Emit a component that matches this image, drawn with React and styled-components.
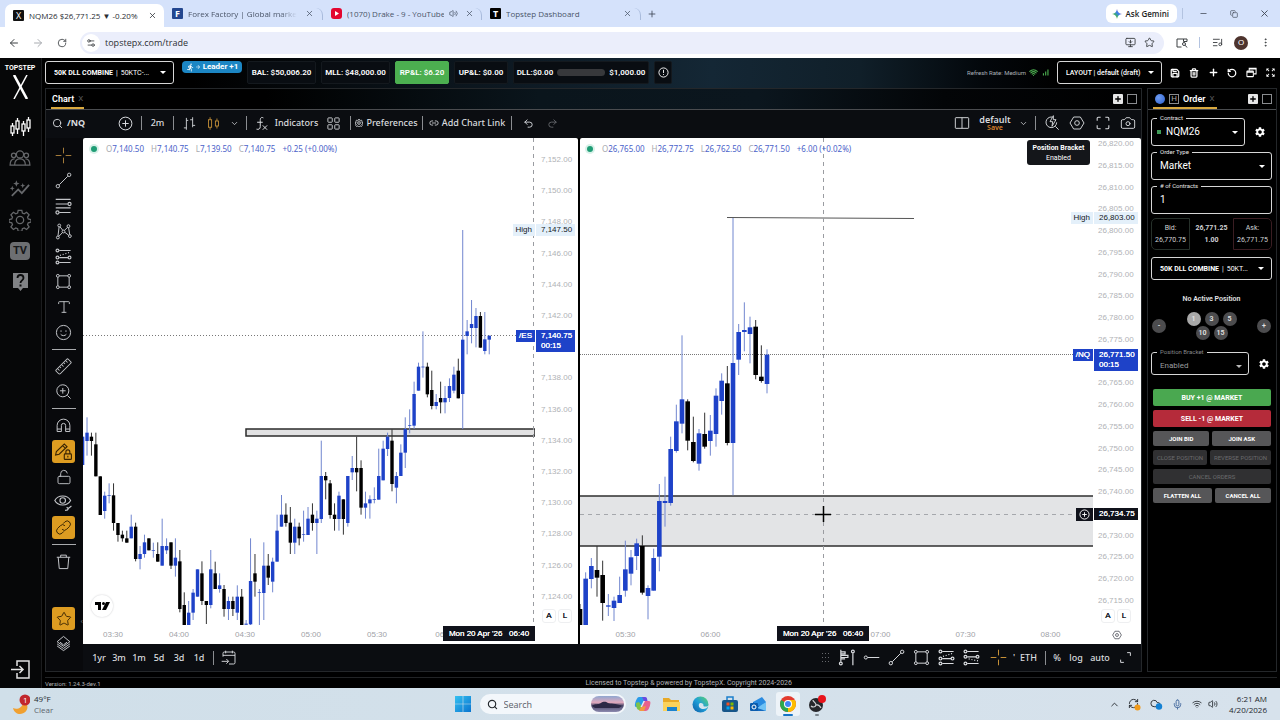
import styled, { createGlobalStyle, css } from 'styled-components'
import {
  ArrowLeft, ArrowRight, RotateCw, RotateCcw, X, Plus, Minus, Star, Type, Trash2, Save, Undo2, Redo2,
  Search, Camera, Mic, Wifi, Volume2, ChevronUp, ChevronDown, Settings2, MoreVertical, ListMusic,
  MonitorDown, Link2, LockOpen, Copy, RefreshCw, Cloud,
} from 'lucide-react'
import { MdSettings, MdSignalCellularAlt, MdDirectionsRun, MdArrowForward, MdZoomOutMap } from 'react-icons/md'

const GlobalStyle = createGlobalStyle`
  * {
    box-sizing: border-box;
  }

  body {
    margin: 0;
    background: #000;
    font-family: Roboto, sans-serif;
    font-size: 8px;
    line-height: 12px;
    color: #fff;
  }

  button, select, input {
    font: inherit;
    color: inherit;
    margin: 0;
    padding: 0;
    border: 0;
    background: none;
  }

  svg {
    display: block;
    flex: none;
  }
`

const uiFont = "'Noto Sans', 'Open Sans', sans-serif"
const chartFont = "'Liberation Sans', Arial, sans-serif"
const blue = '#1e42c8'

const Page = styled.div`
  min-height: 100vh;
  display: flex;
  flex-direction: column;
`

const Spacer = styled.div`
  flex: 1;
`

/* browser */

const TabStrip = styled.div`
  height: 27px;
  display: flex;
  align-items: center;
  padding-left: 5px;
  background: #d5e2fb;
  color: #3f4754;
  font-family: 'Open Sans', sans-serif;
`

const BrowserTab = styled.div`
  flex: 0 1 159px;
  min-width: 0;
  height: ${p => (p.$active ? '23px' : '12px')};
  margin-top: ${p => (p.$active ? '4px' : '0')};
  padding: 0 6px 0 8px;
  display: flex;
  align-items: center;
  gap: 5px;
  border-radius: 7px 7px 0 0;
  background: ${p => (p.$active ? '#fff' : 'transparent')};
  border-right: 1px solid ${p => (p.$line ? '#a9bbdc' : 'transparent')};
  color: ${p => (p.$active ? '#2a2d33' : '#4a5568')};
`

const TabTitle = styled.span`
  flex: 1;
  min-width: 0;
  overflow: hidden;
  white-space: nowrap;
  ${p => p.$fade && css`
    mask-image: linear-gradient(90deg, #000 85%, transparent);
  `}
`

const Favicon = styled.span`
  width: 11px;
  height: 11px;
  flex: none;
  display: grid;
  place-items: center;
  background: ${p => p.$bg};
  border-radius: ${p => p.$round || '1px'};
  color: #fff;
  font-size: 9px;
  font-weight: ${p => p.$weight || 400};
  line-height: 11px;
`

const IconButton = styled.button`
  display: grid;
  place-items: center;
  flex: none;
  width: ${p => p.$w || 16}px;
  height: ${p => p.$h || 16}px;
  color: ${p => p.$color || 'inherit'};
  cursor: pointer;
`

const GeminiButton = styled.button`
  height: 19px;
  padding: 0 8px 0 6px;
  display: flex;
  align-items: center;
  gap: 4px;
  border-radius: 6px;
  background: #fff;
  color: #1f1f1f;
  font-weight: 600;
`

const ThinLine = styled.i`
  width: 1px;
  height: 11px;
  margin: 0 5px;
  background: ${p => p.$color || '#b3c3e0'};
`

const AddressBar = styled.div`
  height: 31px;
  display: flex;
  align-items: center;
  padding: 0 3px 0 2px;
  background: #fff;
  color: #3c4043;
`

const Omnibox = styled.label`
  flex: 1;
  height: 22px;
  margin: 0 6px;
  padding: 0 6px 0 2px;
  display: flex;
  align-items: center;
  gap: 4px;
  border-radius: 11px;
  background: #ebeefb;

  input {
    flex: 1;
    min-width: 0;
    margin-left: 1px;
    font-family: 'Open Sans', sans-serif;
    font-size: 9px;
    color: #2b2e33;
  }
`

const SiteInfo = styled.span`
  width: 18px;
  height: 18px;
  display: grid;
  place-items: center;
  border-radius: 50%;
  background: #fff;
`

const Avatar = styled.span`
  width: 14px;
  height: 14px;
  margin: 0 5px;
  border-radius: 50%;
  background: #4e342e;
  color: #fff;
  font-family: ${chartFont};
  line-height: 14px;
  text-align: center;
`

/* trading app */

const Shell = styled.div`
  flex: 1;
  display: flex;
  background: #000;
`

const SideNav = styled.nav`
  width: 42px;
  flex: none;
  display: flex;
  flex-direction: column;
  align-items: center;
  padding: 4px 1px 7px 0;
  border-right: 1px solid #1b1c1e;
  background: #060708;
  color: #66686b;
`

const Brand = styled.div`
  display: flex;
  flex-direction: column;
  align-items: center;
  gap: 1px;
  margin-bottom: 12px;
  color: #fff;
  font-size: 7px;
  font-weight: 700;
`

const NavButton = styled.button`
  width: 30px;
  height: 31px;
  display: grid;
  place-items: center;
  color: ${p => (p.$active ? '#fff' : 'inherit')};
`

const TvBadge = styled.span`
  width: 20px;
  height: 18px;
  border-radius: 4px;
  background: #6d6f72;
  color: #17181a;
  font-size: 11px;
  font-weight: 700;
  line-height: 18px;
`

const Workspace = styled.div`
  flex: 1;
  min-width: 0;
  display: flex;
  flex-direction: column;
  padding-left: 3px;
`

const TopBar = styled.header`
  height: 30px;
  display: flex;
  align-items: flex-start;
  gap: 5px;
  padding-top: 3px;
  padding-right: 2px;
  background: linear-gradient(90deg, #000 12%, #0a1219 30%, #142735 54%, #101f29 66%, #03070b 76%, #000 82%);
  white-space: nowrap;
`

const SelectBox = styled.label`
  height: 23px;
  width: ${p => p.$w || 'auto'};
  display: flex;
  align-items: center;
  gap: 3px;
  padding: 0 7px 0 8px;
  border: 1px solid #d6d6d6;
  border-radius: 3px;
  font-size: 7px;
  white-space: nowrap;

  select {
    flex: 1;
    min-width: 0;
    appearance: none;
    outline: none;
    font-weight: ${p => p.$weight || 400};
  }
`

const Caret = styled.i`
  flex: none;
  border: 3px solid transparent;
  border-top-color: ${p => p.$color || '#fff'};
  border-bottom: 0;
`

const LeaderBadge = styled.span`
  width: 60px;
  height: 12px;
  margin: 0 0 0 3px;
  display: flex;
  align-items: center;
  justify-content: center;
  border-radius: 4px;
  background: #1c86c4;
  font-weight: 700;

  span {
    margin-left: 2px;
  }
`

const Stat = styled.div`
  height: 23px;
  width: ${p => p.$w}px;
  flex: none;
  display: flex;
  align-items: center;
  justify-content: center;
  gap: 4px;
  border: 1px solid ${p => (p.$green ? '#4caf50' : '#14191e')};
  border-radius: 2px;
  background: ${p => (p.$green ? '#4caf50' : '#090d12')};
  font-weight: 600;
`

const Meter = styled.i`
  width: 48px;
  height: 7px;
  border-radius: 4px;
  background: #37383b;
`

const RefreshRate = styled.span`
  height: 23px;
  display: flex;
  align-items: center;
  gap: 3px;
  margin-right: 2px;
  color: #aab0b6;
  font-size: 6px;

  svg {
    color: #4caf50;
  }
`

const TopActions = styled.div`
  height: 23px;
  display: flex;
  align-items: center;
  gap: 3px;
`

const Panels = styled.main`
  flex: 1;
  display: flex;
  gap: 5px;
  padding-right: 3px;
`

const Panel = styled.section`
  min-width: 0;
  display: flex;
  flex-direction: column;
  flex: ${p => (p.$grow ? '1' : 'none')};
  width: ${p => (p.$grow ? 'auto' : '130px')};
  border: 1px solid #24272a;
  background: ${p => (p.$grow ? '#0b0d11' : '#000')};
`

const PanelTabs = styled.div`
  height: 21px;
  flex: none;
  display: flex;
  align-items: stretch;
  padding: 0 4px 0 5px;
  border-bottom: 1px solid #4a4c4f;
  background: ${p => (p.$glow ? 'linear-gradient(90deg, #000 20%, #0a151c 45%, #0b161e 65%, #030507 82%, #000)' : '#000')};
`

const PanelTab = styled.div`
  display: flex;
  align-items: center;
  gap: 4px;
  padding: 0 ${p => (p.$pad || 1)}px;
  border-top: 2px solid transparent;
  border-bottom: 2px solid #d9a93f;
  font-size: 9px;
  font-weight: 600;

  small {
    color: #5a5c5f;
    font-size: 8px;
    font-weight: 400;
  }
`

const TabTools = styled.div`
  margin-left: auto;
  display: flex;
  align-items: center;
  gap: 4px;
`

const AddBox = styled.button`
  width: 10px;
  height: 10px;
  display: grid;
  place-items: center;
  border-radius: 1px;
  background: #e6e6e6;
  color: #000;
`

const EmptyBox = styled.button`
  width: 10px;
  height: 10px;
  border: 1px solid #8a8c8f;
`

const Globe = styled.i`
  width: 10px;
  height: 10px;
  border-radius: 50%;
  background: radial-gradient(circle at 35% 35%, #6f9cf0, #2b5fd0);
`

const LetterBox = styled.span`
  width: 10px;
  height: 10px;
  border: 1px solid #8a8c8f;
  color: #aaa;
  font-size: 8px;
  font-weight: 400;
  line-height: 8px;
  text-align: center;
`

const Toolbar = styled.div`
  height: ${p => p.$h}px;
  flex: none;
  display: flex;
  align-items: center;
  padding: ${p => p.$pad || '0'};
  background: #0b0d11;
  color: #d9dbdf;
  font-family: ${uiFont};
  font-size: 9px;
  font-weight: 500;
`

const Tool = styled.button`
  width: ${p => p.$w}px;
  height: 22px;
  flex: none;
  display: flex;
  align-items: center;
  justify-content: ${p => (p.$start ? 'flex-start' : 'center')};
  gap: ${p => p.$gap || 4}px;
  padding-left: ${p => (p.$start ? '6px' : '0')};
  color: ${p => p.$color || 'inherit'};
  font-weight: ${p => (p.$bold ? 700 : 'inherit')};
  white-space: nowrap;
`

const Sep = styled.i`
  width: 1px;
  height: 14px;
  flex: none;
  margin: 0 4px;
  background: #8b8d91;
`

const LayoutName = styled.button`
  width: 42px;
  flex: none;
  line-height: 9px;
  padding-bottom: 1px;
  font-weight: 600;

  small {
    display: block;
    color: #d9822b;
    font-size: 7px;
    line-height: 7px;
  }
`

const ChartBody = styled.div`
  flex: 1;
  display: flex;
`

const DrawBar = styled.div`
  width: 37px;
  flex: none;
  display: flex;
  flex-direction: column;
  align-items: center;
  padding: 5px 2px 15px 0;
  color: #c3c5c9;
  background: #08090c;
  position: relative;
`

const DrawGroup = styled.div`
  height: ${p => p.$h}px;
  display: flex;
  flex-direction: column;
  justify-content: space-between;
`

const DrawTool = styled.button`
  width: 25px;
  height: 25px;
  display: grid;
  place-items: center;
  border: 1px solid transparent;
  border-radius: 4px;
  background: ${p => (p.$on ? '#dd9c21' : 'transparent')};
  background-clip: padding-box;
  color: ${p => (p.$on ? '#3a2503' : p.$color || 'inherit')};
`

const DrawSep = styled.i`
  width: 24px;
  height: 1px;
  margin: 4px 0;
  background: #a9abae;
`

const Collapse = styled.button`
  position: absolute;
  right: 0;
  bottom: 43px;
  color: #77797c;
`

const ChartMain = styled.div`
  flex: 1;
  min-width: 0;
  display: flex;
  flex-direction: column;
`

const Panes = styled.div`
  flex: 1;
  display: flex;
  background: #000;
  gap: 2px;
`

const Pane = styled.div`
  width: ${p => p.$w || 'auto'};
  flex: ${p => (p.$w ? 'none' : '1')};
  min-width: 0;
  display: grid;
  grid-template-columns: 1fr ${p => p.$axis}px;
  grid-template-rows: 1fr 19px;
  position: relative;
  background: #fff;
  color: #131722;
  font-family: ${chartFont};
  line-height: 10px;
  border-radius: 2px 2px 0 0;
  overflow: hidden;
`

const Plot = styled.svg`
  width: 100%;
  height: 100%;
`

const PriceAxis = styled.div`
  display: flex;
  flex-direction: column;
  justify-content: space-between;
  align-items: flex-start;
  padding: ${p => p.$pad};
  color: #b0b2b6;
`

const AxisLabel = styled.span`
  visibility: ${p => (p.$covered ? 'hidden' : 'visible')};
`

const TimeAxis = styled.div`
  display: flex;
  align-items: center;
  overflow: hidden;
  color: #a0a2a7;

  span {
    position: relative;
    left: ${p => p.$shift}px;
    flex: 0 0 ${p => p.$slot}px;
    text-align: center;
  }
`

const Legend = styled.div`
  position: absolute;
  left: ${p => p.$left}px;
  top: 6px;
  display: flex;
  align-items: center;
  gap: 7px;
  color: #4a62c9;
  font-family: ${uiFont};
  white-space: nowrap;

  em {
    color: #a7a9ae;
    font-style: normal;
  }

  i {
    width: 6px;
    height: 6px;
    margin-right: 2px;
    border-radius: 50%;
    background: #1f9d75;
    box-shadow: 0 0 0 2px #d9f1e9;
  }
`

const PriceTag = styled.div`
  position: absolute;
  right: 3px;
  top: ${p => p.$top}px;
  display: flex;
  align-items: flex-start;
  gap: 1px;

  span {
    padding: 1px 3px;
    min-height: 12px;
    background: ${p => p.$bg};
    color: ${p => p.$color || '#fff'};
    text-shadow: ${p => (p.$color ? 'none' : '0 0 0 currentColor')};
  }

  span:last-child {
    width: ${p => p.$w}px;
    padding: 1px 0 1px 5px;
  }
`

const TimeTag = styled.div`
  position: absolute;
  left: ${p => p.$left}px;
  bottom: 3px;
  width: 92px;
  padding: 3px 0 2px;
  background: #10121b;
  color: #fff;
  text-align: center;
  text-shadow: 0 0 0 #fff;
  white-space: pre;
`

const ScaleButtons = styled.div`
  position: absolute;
  right: ${p => p.$right}px;
  bottom: 21px;
  display: flex;
  gap: 2px;

  button {
    width: 14px;
    height: 14px;
    border: 1px solid #eeeff1;
    border-radius: 3px;
    background: #fff;
    text-shadow: 0 0 0 currentColor;
  }
`

const Toast = styled.div`
  position: absolute;
  right: 51px;
  top: 2px;
  width: 63px;
  padding: 3px 0 2px;
  border-radius: 3px;
  background: #14161a;
  color: #fff;
  font-family: Roboto, sans-serif;
  font-size: 7px;
  text-align: center;
`

const TvMark = styled.div`
  position: absolute;
  left: 8px;
  bottom: 27px;
  width: 22px;
  height: 22px;
  display: grid;
  place-items: center;
  border-radius: 50%;
  background: #fff;
  box-shadow: 0 0 2px #c8c9cc;
`

const AxisSettings = styled.button`
  justify-self: center;
  align-self: center;
`

/* order ticket */

const Ticket = styled.form`
  display: flex;
  flex-direction: column;
  padding: 2px 4px 8px 3px;

  > fieldset {
    flex: none;
  }
`

const FieldRow = styled.div`
  display: flex;
  align-items: center;
  gap: 9px;
  margin-top: ${p => p.$mt || 0}px;
  padding-right: ${p => p.$pr}px;

  > svg {
    margin-top: 6px;
  }
`

const Field = styled.fieldset`
  flex: 1;
  min-width: 0;
  height: ${p => p.$h || 34}px;
  margin: 0;
  padding: 0 6px 0 8px;
  border: 1px solid #d6d6d6;
  border-radius: 3px;
  color: ${p => (p.$dim ? '#9a9c9f' : '#fff')};

  legend {
    height: 12px;
    margin-left: -3px;
    padding: 0 3px;
    color: ${p => (p.$dim ? '#85878a' : '#e6e6e6')};
    font-size: 6px;
  }

  div {
    height: 16px;
    display: flex;
    align-items: center;
    gap: 5px;
    font-size: ${p => (p.$dim ? 8 : 10)}px;
  }

  select,
  input {
    flex: 1;
    min-width: 0;
    appearance: none;
    outline: none;
  }
`

const Dot = styled.i`
  width: 4px;
  height: 4px;
  margin-left: -3px;
  background: #3f9b57;
`

const Quotes = styled.div`
  display: grid;
  grid-template-columns: 39px 1fr 39px;
  margin: 4px 0 7px;
  color: #d0d2d5;
  font-size: 7px;
  text-align: center;

  div {
    height: 32px;
    padding: 3px 0;
    border: 1px solid transparent;
  }

  div:first-child {
    border-color: #26302a;
    border-radius: 5px 0 0 5px;
  }

  div:last-child {
    border-color: #3a1d22;
    border-radius: 0 5px 5px 0;
  }
`

const Position = styled.p`
  margin: 13px 0 7px;
  font-size: 7px;
  font-weight: 600;
  text-align: center;
  color: #e2e3e5;
`

const SizeRow = styled.div`
  display: flex;
  align-items: center;
  justify-content: space-between;
  padding: 0 1px;
`

const SizeGrid = styled.div`
  width: 56px;
  display: flex;
  flex-wrap: wrap;
  justify-content: center;
  column-gap: 4px;
`

const RoundButton = styled.button`
  width: 14px;
  height: 14px;
  border-radius: 50%;
  background: ${p => (p.$on ? '#a8a8a8' : '#4c4c4e')};
  color: #e4e4e4;
  font-size: 7px;
  font-weight: 600;
  line-height: 14px;
  text-align: center;
`

const Actions = styled.div`
  display: flex;
  flex-direction: column;
  gap: 4px;
  padding: 0 1px 0 2px;
  margin-top: 14px;
`

const ActionRow = styled.div`
  display: flex;
  gap: 3px;
`

const ActionButton = styled.button`
  flex: 1 1 auto;
  min-width: ${p => (p.$half ? '45%' : 0)};
  height: ${p => (p.$bg ? 17 : 15)}px;
  border-radius: 2px;
  background: ${p => p.$bg || (p.disabled ? '#303032' : '#565658')};
  color: ${p => (p.disabled ? '#6b6b6d' : '#fff')};
  font-size: ${p => (p.$bg ? 7 : 6)}px;
  font-weight: ${p => (p.disabled ? 400 : 700)};
  white-space: nowrap;
`

const Footer = styled.footer`
  height: 11px;
  margin: 5px 3px 0 0;
  display: flex;
  border-top: 1px solid #222426;
  color: #b2b4b7;
  font-size: 6px;
  line-height: 11px;

  span:last-child {
    flex: 1;
    font-size: 7px;
    text-align: center;
  }
`

/* taskbar */

const Taskbar = styled.div`
  height: 32px;
  flex: none;
  display: grid;
  grid-template-columns: 1fr auto 1fr;
  align-items: center;
  padding: 0 13px 0 12px;
  background: linear-gradient(90deg, #d0dfe9, #d7e2ec);
  color: #24292e;
  font-family: 'Open Sans', sans-serif;
  line-height: 11px;
`

const Weather = styled.div`
  display: flex;
  align-items: center;
  gap: 4px;

  span {
    color: #5c656d;
  }
`

const Apps = styled.div`
  display: flex;
  align-items: center;
  gap: 5px;
`

const AppButton = styled.button`
  width: 24px;
  height: 24px;
  display: grid;
  place-items: center;
  border-radius: 3px;
  background: ${p => (p.$active ? '#edf3f8' : 'transparent')};
  position: relative;

  &::after {
    content: '';
    position: absolute;
    bottom: 0;
    width: ${p => (p.$active ? 10 : 4)}px;
    height: 2px;
    border-radius: 1px;
    background: ${p => (p.$active ? '#1673c5' : p.$running ? '#7b858d' : 'transparent')};
  }
`

const SearchPill = styled.label`
  width: 146px;
  height: 20px;
  display: flex;
  align-items: center;
  gap: 6px;
  padding: 0 2px 0 7px;
  border-radius: 10px;
  background: #f3f7fb;

  input {
    flex: 1;
    min-width: 0;
    font-size: 9px;
  }

  input::placeholder {
    color: #5b6168;
  }
`

const Tray = styled.div`
  justify-self: end;
  display: flex;
  align-items: center;
  gap: 6px;
  text-align: right;
`

const Clock = styled.div`
  margin-left: 5px;
`

/* charts: each candle is [up, high, top, bottom, low], in thirds of a pixel from the base line */

const BASE = 252
const level = v => BASE + v / 3

const esCandles = [
  [1, 140, 140, 225, 225], [1, 82, 128, 153, 197], [0, 128, 140, 153, 197], [0, 128, 163, 259, 259],
  [0, 259, 259, 375, 375], [1, 305, 317, 363, 386], [1, 280, 316, 318, 340], [0, 280, 316, 399, 422],
  [0, 399, 399, 435, 455], [0, 422, 434, 445, 455], [0, 422, 445, 458, 458], [1, 374, 410, 445, 445],
  [0, 398, 410, 507, 514], [1, 468, 492, 507, 538], [1, 434, 457, 492, 503], [0, 445, 445, 481, 481],
  [1, 458, 480, 482, 503], [0, 457, 492, 515, 515], [1, 386, 468, 527, 527], [1, 445, 468, 481, 492],
  [0, 457, 457, 527, 537], [1, 445, 503, 527, 560], [0, 480, 514, 657, 667], [0, 607, 645, 706, 706],
  [1, 633, 668, 706, 706], [1, 597, 608, 668, 690], [1, 538, 538, 620, 620], [0, 514, 550, 633, 645],
  [0, 633, 633, 645, 702], [1, 480, 538, 645, 655], [0, 515, 550, 597, 597], [1, 550, 586, 597, 608],
  [0, 585, 597, 657, 680], [1, 620, 633, 657, 690], [0, 620, 633, 657, 678], [1, 586, 620, 668, 690],
  [0, 597, 620, 706, 706], [1, 690, 701, 704, 706], [1, 445, 573, 703, 706], [0, 492, 550, 575, 620],
  [1, 597, 607, 609, 706], [1, 457, 527, 609, 690], [0, 492, 527, 563, 585], [1, 503, 515, 575, 607],
  [1, 374, 422, 515, 515], [1, 315, 374, 410, 410], [0, 340, 374, 399, 410], [0, 351, 398, 458, 492],
  [1, 386, 410, 458, 492], [0, 398, 410, 445, 466], [1, 362, 432, 434, 455], [1, 351, 386, 435, 435],
  [0, 340, 374, 399, 422], [1, 362, 386, 399, 492], [1, 152, 258, 387, 399], [0, 246, 258, 271, 328],
  [0, 270, 280, 375, 386], [0, 340, 374, 387, 422], [1, 305, 317, 387, 422], [0, 328, 328, 387, 434],
  [1, 258, 258, 399, 410], [1, 198, 234, 247, 270], [0, 140, 234, 247, 304], [0, 211, 234, 353, 374],
  [1, 305, 340, 353, 386], [1, 316, 328, 340, 386], [1, 292, 327, 329, 340], [1, 176, 258, 329, 329],
  [1, 152, 176, 271, 271], [1, 128, 140, 177, 198], [0, 118, 152, 282, 304], [1, 246, 258, 293, 340],
  [1, 163, 188, 258, 258], [1, 82, 117, 188, 234], [1, 58, 105, 107, 130], [1, -25, 12, 107, 117],
  [1, -82, -70, 2, 2], [1, -176, -70, -68, -37], [0, -82, -70, 13, 22], [0, -58, 0, 48, 58],
  [1, 12, 36, 48, 58], [0, -25, 24, 37, 70], [1, -12, 24, 37, 70], [1, -35, -12, 24, 36],
  [1, -70, -46, 2, 10], [0, -94, -58, 25, 25], [1, -480, -151, 12, 117], [1, -210, -176, -162, -107],
  [1, -270, -198, -186, -140], [1, -246, -222, -186, -128], [0, -234, -222, -127, -127],
  [1, -234, -152, -117, -107], [1, -163, -163, -151, -107],
]

const nqCandles = [
  [0, 642, 657, 706, 706], [1, 547, 566, 706, 706], [1, 504, 528, 567, 595], [0, 468, 540, 563, 620],
  [0, 512, 555, 639, 692], [1, 612, 646, 650, 678], [1, 620, 632, 654, 693], [1, 560, 615, 639, 639],
  [1, 452, 538, 602, 620], [1, 480, 502, 551, 586], [1, 446, 460, 498, 540], [0, 436, 468, 608, 614],
  [1, 586, 594, 618, 688], [1, 476, 504, 602, 602], [1, 282, 333, 500, 544], [1, 260, 333, 339, 410],
  [1, 140, 177, 339, 347], [1, 44, 94, 183, 188], [1, -164, 28, 101, 130], [0, 28, 34, 152, 181],
  [0, 80, 156, 213, 217], [1, 117, 130, 221, 242], [0, 68, 132, 170, 176], [1, 75, 122, 153, 197],
  [1, -5, 17, 132, 170], [1, -50, -28, 33, 74], [0, -72, -20, 159, 166], [1, -518, -81, 159, 316],
  [1, -198, -174, -91, -45], [1, -263, -180, -174, -116], [1, -220, -188, -168, -80],
  [0, -210, -190, -45, -32], [0, -134, -40, -27, -22], [1, -122, -106, -18, 10],
]

const esPrices = Array.from({ length: 15 }, (_, i) => 7152 - i * 2)
const nqPrices = Array.from({ length: 22 }, (_, i) => 26820 - i * 5)
const price = n => n.toLocaleString('en-US', { minimumFractionDigits: 2 })

const Candles = ({ data, start, step, width }) => (
  <g>
    {data.map(([up, high, top, bottom, low], i) => {
      const x = start + i * step
      return (
        <g key={i}>
          <line x1={x} x2={x} y1={level(high)} y2={level(low)} stroke={up ? '#7186cf' : '#333'} />
          <rect x={x - width / 2} width={width} y={level(top)} height={(bottom - top) / 3} fill={up ? blue : '#000'} />
        </g>
      )
    })}
  </g>
)

/* labels under a price tag stay blank */
const Prices = ({ list, covered, pad }) => (
  <PriceAxis $pad={pad}>
    {list.map(p => <AxisLabel key={p} $covered={covered.includes(p)}>{covered.includes(p) ? '\u00a0' : price(p)}</AxisLabel>)}
  </PriceAxis>
)

const Ohlc = ({ left, values, change }) => (
  <Legend $left={left}>
    <i />
    {values.map(([key, value]) => <span key={key}><em>{key}</em>{value}</span>)}
    <span>{change}</span>
  </Legend>
)

const Scale = ({ right }) => (
  <ScaleButtons $right={right}>
    <button type="button">A</button>
    <button type="button">L</button>
  </ScaleButtons>
)

/* icons */

const Glyph = ({ size = 17, stroke = 1.4, children }) => (
  <svg width={size} height={size} viewBox="0 0 24 24" fill="none" stroke="currentColor" strokeWidth={stroke}>
    {children}
  </svg>
)

const CrossIcon = () => <Glyph><path d="M12 1v8M12 15v8M1 12h8M15 12h8" /></Glyph>
const TrendIcon = () => (
  <Glyph><circle cx="4" cy="20" r="2.4" /><circle cx="20" cy="4" r="2.4" /><path d="M6 18 18 6" /></Glyph>
)
const FibIcon = () => (
  <Glyph stroke="1.7"><path d="M1 2h21M1 8.500h17M1 14h21M6 20.500h16" /><circle cx="20.500" cy="8.500" r="2.200" /><circle cx="3.500" cy="20.500" r="2.200" /></Glyph>
)
const PatternIcon = () => (
  <Glyph>
    <circle cx="6" cy="3.500" r="2" /><circle cx="4" cy="20.500" r="2" /><circle cx="12" cy="12" r="2" />
    <circle cx="19" cy="4.500" r="2" /><circle cx="21" cy="18.500" r="2" />
    <path d="M5.800 5.500 4.200 18.500M7 5.200l4 5.200M10.600 13.400 5.400 19M13.300 10.500l4.600-4.600M13.700 13l5.600 4.300M19.200 6.500l1.600 10" />
  </Glyph>
)
const ForecastIcon = () => (
  <Glyph stroke="1.7">
    <circle cx="3.500" cy="3.500" r="2" /><circle cx="3.500" cy="13.500" r="2" /><circle cx="20.500" cy="13.500" r="2" /><circle cx="3.500" cy="20.500" r="2" />
    <path d="M6 3.500h16M6 13.500h12.500M6 20.500h16" /><path d="M7 10.500 21 6" strokeDasharray="1.500 2.500" />
  </Glyph>
)
const RangeIcon = () => (
  <Glyph stroke="1.7">
    <circle cx="3.500" cy="3.500" r="2" /><circle cx="3.500" cy="11" r="2" /><circle cx="20.500" cy="11" r="2" /><circle cx="3.500" cy="20.500" r="2" />
    <path d="M6 3.500h16M6 11h12.500M6 20.500h16" /><path d="M8 14l14 3" strokeDasharray="1.500 2.500" />
  </Glyph>
)
const RectIcon = () => (
  <Glyph>
    <circle cx="4" cy="4" r="2" /><circle cx="20" cy="4" r="2" /><circle cx="4" cy="20" r="2" /><circle cx="20" cy="20" r="2" />
    <path d="M6 4h12M6 20h12M4 6v12M20 6v12" />
  </Glyph>
)
const SmileIcon = () => (
  <Glyph><circle cx="12" cy="12" r="10" /><path d="M8.500 9v2M15.500 9v2M8 14.500c1.500 2.500 6.500 2.500 8 0" /></Glyph>
)
const RulerIcon = () => (
  <Glyph><g transform="rotate(-45 12 12)"><rect x="0" y="8" width="24" height="8" rx="1.500" /><path d="M4 8v4M8 8v3M12 8v4M16 8v3M20 8v4" /></g></Glyph>
)
const ZoomIcon = () => (
  <Glyph><circle cx="11" cy="11" r="8.500" /><path d="M11 7v8M7 11h8M17.500 17.500 22 22" /></Glyph>
)
const MagnetIcon = () => (
  <Glyph><path d="M3 20.500V12a9 9 0 0 1 18 0v8.500h-6V12a3 3 0 0 0-6 0v8.500zM3 17h6M15 17h6" /></Glyph>
)
const PencilLockIcon = () => (
  <Glyph size={19}>
    <path d="M2 16.500l1-4.500L13 2.500l3.500 3.500L6.500 15.500zM11 4.500l3.500 3.500" />
    <rect x="13" y="15" width="9" height="7" rx="1" /><path d="M15 15v-2.500a2.500 2.500 0 0 1 5 0V15M17.500 17.500v2" />
  </Glyph>
)
const EyeBrushIcon = () => (
  <Glyph size={19}>
    <path d="M1 9.500C5 2 17 2 21 9.500 17 17 5 17 1 9.500z" /><circle cx="11" cy="9.500" r="3.500" />
    <path d="M14 22c2 0 4-.5 4-2.500l4-3M18 19.500l-2-1.500" />
  </Glyph>
)
const LayersIcon = () => (
  <Glyph><path d="M3 9.500 12 2l9 7.500-9 6.500z" /><path d="M3 12.500l9 6.500 9-6.500M3 15.500l9 6.500 9-6.500M7 10l5 4 5-4" /></Glyph>
)
const PlusCircleIcon = () => <Glyph><circle cx="12" cy="12" r="9" /><path d="M12 7.500v9M7.500 12h9" /></Glyph>
const BarsIcon = () => <Glyph size={15}><path d="M3 19h4M7 3v19M7 7h3M17 2v16M13 6h4M17 15h4" /></Glyph>
const CandlesIcon = ({ size = 15 }) => (
  <Glyph size={size}><rect x="4" y="6" width="5" height="12" /><path d="M6.500 2v4M6.500 18v4M17.500 4v4M17.500 16v4" /><rect x="15" y="8" width="5" height="8" /></Glyph>
)
const FxIcon = () => (
  <Glyph size={15} stroke="1.600"><path d="M15 3c-4-2-5 1-5 4v10c0 4-3 5-6 4M5 10h9M14 15l7 7M21 15l-7 7" /></Glyph>
)
const GridIcon = () => (
  <Glyph size={15}><rect x="3" y="3" width="7" height="7" rx="1" /><rect x="14" y="3" width="7" height="7" rx="1" /><rect x="3" y="14" width="7" height="7" rx="1" /><rect x="14" y="14" width="7" height="7" rx="1" /></Glyph>
)
const HexIcon = ({ size = 16 }) => (
  <Glyph size={size}><path d="M7 3h10l5.500 9L17 21H7L1.500 12z" /><circle cx="12" cy="12" r="3.500" /></Glyph>
)
const GearIcon = ({ size = 22, stroke }) => (
  <Glyph size={size} stroke={stroke}>
    <circle cx="12" cy="12" r="4" />
    <path d="M10 1.500h4l.6 3 2 .8 2.600-1.700 2.700 2.700-1.700 2.600.8 2 3 .6v2.900l-3 .6-.8 2 1.700 2.600-2.700 2.700-2.600-1.700-2 .8-.6 3h-4l-.6-3-2-.8-2.600 1.700-2.700-2.700 1.700-2.600-.8-2-3-.6v-2.900l3-.6.8-2-1.700-2.600 2.700-2.700 2.600 1.700 2-.8z" />
  </Glyph>
)
const SplitIcon = () => <Glyph size={16}><rect x="2" y="4" width="20" height="16" rx="1" /><path d="M12 4v16" /></Glyph>
const QuickIcon = () => (
  <Glyph size={16}><path d="M12 3a8 8 0 1 0 7 8M17 17l5 5M14 1l-5 9h4l-1 7 6-10h-4z" /></Glyph>
)
const ExpandIcon = () => (
  <Glyph size={14} stroke="1.800"><path d="M2 8V4a2 2 0 0 1 2-2h4M16 2h4a2 2 0 0 1 2 2v4M22 16v4a2 2 0 0 1-2 2h-4M8 22H4a2 2 0 0 1-2-2v-4" /></Glyph>
)
const CornersIcon = () => <Glyph size={13} stroke="1.800"><path d="M15 3h6v6M3 16v5h6" /></Glyph>
const CalendarIcon = () => (
  <Glyph size={16}><path d="M3 10V5a2 2 0 0 1 2-2h14a2 2 0 0 1 2 2v14a2 2 0 0 1-2 2h-7M3 8h18M7 1v4M17 1v4M1 17h10M8 13.500l3.500 3.500L8 20.500" /></Glyph>
)
const WindowsIcon = () => (
  <Glyph size={11} stroke="2.200"><path d="M7 8V3h15v12h-5" /><path d="M7 4h15" strokeWidth="3" /><rect x="2" y="9" width="14" height="12" rx="1" /><path d="M2 11h14" strokeWidth="3" /></Glyph>
)
const ProfileIcon = () => (
  <Glyph stroke="1.700"><path d="M4 1v17M4 4h6v3H4M4 9h10v3H4M4 14h6M21 6v17" /><circle cx="4" cy="20.500" r="2" /><circle cx="21" cy="3.500" r="2" /></Glyph>
)
const HLineIcon = () => <Glyph><circle cx="4" cy="12" r="2.200" /><path d="M6.500 12H23" /></Glyph>
const DotsIcon = () => (
  <svg width="7" height="9" viewBox="0 0 7 9" fill="#66686c">
    {[0, 4, 8].map(y => <g key={y}><rect y={y} width="1" height="1" /><rect x="3" y={y} width="1" height="1" /><rect x="6" y={y} width="1" height="1" /></g>)}
  </svg>
)
const StatsIcon = () => (
  <svg width="21" height="20" viewBox="0 0 21 20" fill="none" stroke="currentColor" strokeWidth="1.300">
    <rect x="1" y="9" width="3" height="7" /><rect x="6" y="4" width="3" height="8" />
    <rect x="12" y="7" width="3" height="7" /><rect x="17" y="3" width="3" height="8" />
    <path d="M2.500 6v3M2.500 16v3M7.500 1v3M7.500 12v5M13.500 4v3M13.500 14v5M18.500 0v3M18.500 11v4" />
  </svg>
)
const PeopleIcon = () => (
  <svg width="22" height="18" viewBox="0 0 24 20" fill="none" stroke="currentColor" strokeWidth="1.400">
    <circle cx="12" cy="6" r="4" /><path d="M6 18c0-4 2-7 6-7s6 3 6 7z" />
    <circle cx="5" cy="7" r="2.500" /><path d="M5.500 18H1c0-4 1-7 5-7" /><circle cx="19" cy="7" r="2.500" /><path d="M18.500 18H23c0-4-1-7-5-7" />
  </svg>
)
const InsightIcon = () => (
  <svg width="20" height="18" viewBox="0 0 22 19" fill="currentColor">
    <path d="M2 17 9 10l4 4 8-9" fill="none" stroke="currentColor" strokeWidth="2" />
    <path d="M7 0l1 2.500L10.500 3.500 8 4.500 7 7 6 4.500 3.500 3.500 6 2.500zM14 3l.8 2 2 .8-2 .8-.8 2-.8-2-2-.8 2-.8zM2.500 6l.8 2 2 .8-2 .8-.8 2-.8-2-2-.8 2-.8z" />
  </svg>
)
const HelpIcon = () => (
  <svg width="17" height="20" viewBox="0 0 17 20">
    <path d="M1 1h15v15h-5l-2.500 3L6 16H1z" fill="#808285" />
    <path d="M5.500 6c0-4 6-4 6 0 0 2.500-3 2.200-3 5" fill="none" stroke="#0a0b0c" strokeWidth="1.800" />
    <rect x="7.500" y="12.500" width="2" height="2" fill="#0a0b0c" />
  </svg>
)
const ExitIcon = () => (
  <svg width="19" height="19" viewBox="0 0 19 19" fill="none" stroke="#e2e2e2" strokeWidth="1.500">
    <path d="M6 6V1h12v17H6v-5M0 9.500h12M8.500 6l3.500 3.500L8.500 13" />
  </svg>
)

/* sections */

const Browser = () => (
  <>
    <TabStrip>
      <BrowserTab $active>
        <Favicon $bg="#111">X</Favicon>
        <TabTitle>NQM26 $26,771.25 ▼ -0.20%</TabTitle>
        <IconButton $w={10}><X size={9} /></IconButton>
      </BrowserTab>
      <BrowserTab $line>
        <Favicon $bg="#24478f" $weight={700}>F</Favicon>
        <TabTitle $fade>Forex Factory | Global markets</TabTitle>
        <IconButton $w={14}><X size={9} /></IconButton>
      </BrowserTab>
      <BrowserTab $line>
        <Favicon $bg="#e3052f" $round="3px">
          <svg width="5" height="5" viewBox="0 0 5 5"><path d="M1 0l4 2.500L1 5z" fill="#fff" /></svg>
        </Favicon>
        <TabTitle>(1070) Drake - 9 - YouTube</TabTitle>
        <Volume2 size={9} />
        <IconButton $w={12}><X size={9} /></IconButton>
      </BrowserTab>
      <BrowserTab $line>
        <Favicon $bg="#000" $weight={700}>T</Favicon>
        <TabTitle>Topstep Dashboard</TabTitle>
        <IconButton $w={14}><X size={9} /></IconButton>
      </BrowserTab>
      <IconButton $w={22}><Plus size={10} /></IconButton>
      <Spacer />
      <GeminiButton>
        <svg width="10" height="10" viewBox="0 0 10 10">
          <defs>
            <linearGradient id="gem" x1="0" y1="1" x2="1" y2="0">
              <stop offset="0" stopColor="#f6b917" /><stop offset=".35" stopColor="#3fae62" />
              <stop offset=".6" stopColor="#3b7bf2" /><stop offset="1" stopColor="#e8453c" />
            </linearGradient>
          </defs>
          <path d="M5 0c.5 3 2 4.500 5 5-3 .5-4.500 2-5 5-.5-3-2-4.500-5-5 3-.5 4.500-2 5-5z" fill="url(#gem)" />
        </svg>
        Ask Gemini
      </GeminiButton>
      <ThinLine />
      <IconButton $w={30}><Minus size={9} /></IconButton>
      <IconButton $w={31}><Copy size={8} /></IconButton>
      <IconButton $w={31}><X size={11} /></IconButton>
    </TabStrip>
    <AddressBar>
      <IconButton $w={24}><ArrowLeft size={12} /></IconButton>
      <IconButton $w={24} $color="#a8abb0"><ArrowRight size={12} /></IconButton>
      <IconButton $w={24}><RotateCw size={10} /></IconButton>
      <Omnibox>
        <SiteInfo><Settings2 size={10} /></SiteInfo>
        <input aria-label="Address" defaultValue="topstepx.com/trade" />
        <MonitorDown size={11} />
        <IconButton $w={18}><Star size={11} /></IconButton>
      </Omnibox>
      <IconButton $w={24}>
        <Glyph size={12} stroke="2"><path d="M11 20H2V4h20v5M15 4v5h7" /><circle cx="16" cy="14" r="3" /><path d="M18.500 16.500 22 21" /></Glyph>
      </IconButton>
      <ThinLine />
      <IconButton $w={24}><ListMusic size={11} /></IconButton>
      <Avatar>O</Avatar>
      <IconButton $w={24}><MoreVertical size={11} /></IconButton>
    </AddressBar>
  </>
)

const Nav = () => (
  <SideNav>
    <Brand>
      TOPSTEP
      <svg width="17" height="24" viewBox="0 0 17 24" stroke="#fff">
        <path d="M2 0 15 24" strokeWidth="2.600" /><path d="M15 0 2 24" strokeWidth="1.500" />
      </svg>
    </Brand>
    <NavButton $active aria-label="Trade"><StatsIcon /></NavButton>
    <NavButton aria-label="Leaderboard"><PeopleIcon /></NavButton>
    <NavButton aria-label="Insights"><InsightIcon /></NavButton>
    <NavButton aria-label="Settings"><GearIcon /></NavButton>
    <NavButton><TvBadge>TV</TvBadge></NavButton>
    <NavButton aria-label="Help"><HelpIcon /></NavButton>
    <Spacer />
    <IconButton $w={24} $h={24} aria-label="Sign out"><ExitIcon /></IconButton>
  </SideNav>
)

const AccountSelect = ({ id, value, width }) => (
  <SelectBox $w={width} htmlFor={id}>
    <strong>50K DLL COMBINE</strong>|
    <select id={id}><option>{value}</option></select>
    <Caret />
  </SelectBox>
)

const Header = () => (
  <TopBar>
    <AccountSelect id="account" value="50KTC-..." width="129px" />
    <LeaderBadge><MdDirectionsRun size={9} /><MdArrowForward size={6} /><span>Leader +1</span></LeaderBadge>
    <Stat $w={69}>BAL: $50,006.20</Stat>
    <Stat $w={69}>MLL: $48,000.00</Stat>
    <Stat $w={54} $green>RP&amp;L: $6.20</Stat>
    <Stat $w={54}>UP&amp;L: $0.00</Stat>
    <Stat $w={136}>DLL:$0.00 <Meter /> $1,000.00</Stat>
    <Stat $w={18}>
      <Glyph size={11} stroke="2"><circle cx="12" cy="12" r="10" /><path d="M12 6v7M12 15.500v2" /></Glyph>
    </Stat>
    <Spacer />
    <RefreshRate>Refresh Rate: Medium <Wifi size={9} strokeWidth={3} /><MdSignalCellularAlt size={9} /></RefreshRate>
    <SelectBox $w="105px" $weight={500} htmlFor="layout">
      <select id="layout"><option>LAYOUT | default (draft)</option></select>
      <Caret />
    </SelectBox>
    <TopActions>
      <IconButton><Save size={10} strokeWidth={3} /></IconButton>
      <IconButton><Trash2 size={10} strokeWidth={3} /></IconButton>
      <IconButton><Plus size={11} strokeWidth={3} /></IconButton>
      <IconButton><RotateCcw size={10} strokeWidth={3} /></IconButton>
      <IconButton><WindowsIcon /></IconButton>
      <IconButton><MdZoomOutMap size={11} /></IconButton>
    </TopActions>
  </TopBar>
)

const ChartToolbar = () => (
  <Toolbar $h={28} $pad="0 1px 2px 0">
    <Tool $w={67} $start $bold><Search size={11} />/NQ</Tool>
    <Tool $w={24}><PlusCircleIcon /></Tool>
    <Sep />
    <Tool $w={23}>2m</Tool>
    <Sep />
    <Tool $w={23}><BarsIcon /></Tool>
    <Tool $w={25} $color="#c89238"><CandlesIcon /></Tool>
    <Tool $w={16}><ChevronDown size={9} /></Tool>
    <Sep />
    <Tool $w={70} $gap={6}><FxIcon />Indicators</Tool>
    <Tool $w={25}><GridIcon /></Tool>
    <Sep />
    <Tool $w={63} $gap={3}><GearIcon size={8} stroke="2.600" />Preferences</Tool>
    <Sep />
    <Tool $w={80} $gap={3}><Link2 size={10} />Add Chart Link</Tool>
    <Sep />
    <Tool $w={24}><Undo2 size={11} /></Tool>
    <Tool $w={25} $color="#66686c"><Redo2 size={11} /></Tool>
    <Spacer />
    <Tool $w={24}><SplitIcon /></Tool>
    <LayoutName>default<small>Save</small></LayoutName>
    <Tool $w={15}><ChevronDown size={9} /></Tool>
    <Sep />
    <Tool $w={24}><QuickIcon /></Tool>
    <Tool $w={26}><HexIcon /></Tool>
    <Tool $w={26}><ExpandIcon /></Tool>
    <Tool $w={24}><Camera size={16} strokeWidth={1.400} /></Tool>
  </Toolbar>
)

const DrawingBar = () => (
  <DrawBar>
    <DrawGroup $h={202}>
      <DrawTool $color="#a67c3b"><CrossIcon /></DrawTool>
      <DrawTool><TrendIcon /></DrawTool>
      <DrawTool><FibIcon /></DrawTool>
      <DrawTool><PatternIcon /></DrawTool>
      <DrawTool><ForecastIcon /></DrawTool>
      <DrawTool><RectIcon /></DrawTool>
      <DrawTool><Type size={16} strokeWidth={1.400} /></DrawTool>
      <DrawTool><SmileIcon /></DrawTool>
    </DrawGroup>
    <DrawSep />
    <DrawTool><RulerIcon /></DrawTool>
    <DrawTool><ZoomIcon /></DrawTool>
    <DrawSep />
    <DrawGroup $h={127}>
      <DrawTool><MagnetIcon /></DrawTool>
      <DrawTool $on><PencilLockIcon /></DrawTool>
      <DrawTool><LockOpen size={16} strokeWidth={1.400} /></DrawTool>
      <DrawTool><EyeBrushIcon /></DrawTool>
      <DrawTool $on><Glyph><path d="M10 14.500a4.500 4.500 0 0 0 6.500 0l4-4a4.600 4.600 0 0 0-6.500-6.500l-2.500 2.500M14 9.500a4.500 4.500 0 0 0-6.500 0l-4 4a4.600 4.600 0 0 0 6.500 6.500l2.500-2.500" /></Glyph></DrawTool>
    </DrawGroup>
    <DrawSep />
    <DrawTool><Glyph><path d="M2.500 6h19M8 6V3h8v3M4.500 6l1.500 16h12l1.500-16" /></Glyph></DrawTool>
    <Spacer />
    <DrawTool $on><Star size={16} strokeWidth={1.400} /></DrawTool>
    <DrawTool><LayersIcon /></DrawTool>
    <Collapse aria-label="Hide toolbar">‹</Collapse>
  </DrawBar>
)

const EsPane = () => (
  <Pane $w="495px" $axis={43}>
    <Plot>
      <rect x="163" y="291" width="289" height="7" fill="#e2e2e3" stroke="#2b2b2b" strokeWidth="1.500" />
      <line x1="0" x2="100%" y1="197.500" y2="197.500" stroke="#777" strokeDasharray="1 2" />
      <Candles data={esCandles} start={-0.4} step={4.420} width={3.400} />
      <line x1="450.500" x2="450.500" y1="0" y2="100%" stroke="#9a9ca1" strokeDasharray="4 4" />
    </Plot>
    <Prices list={esPrices} covered={[7140]} pad="17px 0 23px 6px" />
    <TimeAxis $shift={-3} $slot={66}>
      {['03:30', '04:00', '04:30', '05:00', '05:30', '06:0'].map(t => <span key={t}>{t}</span>)}
    </TimeAxis>
    <Ohlc
      left={8}
      values={[['O', '7,140.50'], ['H', '7,140.75'], ['L', '7,139.50'], ['C', '7,140.75']]}
      change="+0.25 (+0.00%)"
    />
    <PriceTag $top={86} $w={39} $bg="#e4f0fa" $color="#131722"><span>High</span><span>7,147.50</span></PriceTag>
    <PriceTag $top={192} $w={39} $bg={blue}><span>/ES</span><span>7,140.75<br />00:15</span></PriceTag>
    <Scale right={6} />
    <TimeTag $left={360}>{"Mon 20 Apr '26   06:40"}</TimeTag>
    <TvMark>
      <svg width="15" height="9" viewBox="0 0 15 9"><path d="M0 0h6v8H3V3H0zM11 0h4l-4 8H7z" /><circle cx="8.500" cy="1.500" r="1.500" /></svg>
    </TvMark>
  </Pane>
)

const NqPane = () => (
  <Pane $axis={48}>
    <Plot>
      <rect x="-2" y="358" width="110%" height="50" fill="#e3e4e6" stroke="#2f2f2f" strokeWidth="1.500" />
      <line x1="0" x2="100%" y1="216.500" y2="216.500" stroke="#777" strokeDasharray="1 1" />
      <line x1="0" x2="100%" y1="376.500" y2="376.500" stroke="#a5a7ac" strokeDasharray="4 4" />
      <Candles data={nqCandles} start={0} step={5.667} width={4.600} />
      <line x1="147" x2="334" y1="79.500" y2="80.500" stroke="#555" />
      <line x1="243.500" x2="243.500" y1="0" y2="100%" stroke="#9a9ca1" strokeDasharray="4 4" />
      <path d="M235 376.500h16M243.500 368v16" stroke="#000" strokeWidth="1.500" />
    </Plot>
    <Prices list={nqPrices} covered={[26770, 26735]} pad="1px 0 19px 5px" />
    <TimeAxis $shift={3} $slot={85}>
      {['05:30', '06:00', '', '07:00', '07:30', '08:00'].map(t => <span key={t}>{t}</span>)}
    </TimeAxis>
    <AxisSettings aria-label="Axis settings"><HexIcon size={10} /></AxisSettings>
    <Ohlc
      left={7}
      values={[['O', '26,765.00'], ['H', '26,772.75'], ['L', '26,762.50'], ['C', '26,771.50']]}
      change="+6.00 (+0.02%)"
    />
    <Toast><strong>Position Bracket</strong><br />Enabled</Toast>
    <PriceTag $top={74} $w={44} $bg="#e4f0fa" $color="#131722"><span>High</span><span>26,803.00</span></PriceTag>
    <PriceTag $top={211} $w={44} $bg={blue}><span>/NQ</span><span>26,771.50<br />00:15</span></PriceTag>
    <PriceTag $top={370} $w={44} $bg="#10121b">
      <span><Glyph size={11} stroke="2"><circle cx="12" cy="12" r="10" /><path d="M12 7v10M7 12h10" /></Glyph></span>
      <span>26,734.75</span>
    </PriceTag>
    <Scale right={10} />
    <TimeTag $left={197}>{"Mon 20 Apr '26   06:40"}</TimeTag>
  </Pane>
)

const RangeBar = () => (
  <Toolbar $h={27} $pad="0 3px 0 6px">
    {['1yr', '3m', '1m', '5d', '3d', '1d'].map(r => <Tool key={r} $w={20}>{r}</Tool>)}
    <Sep />
    <Tool $w={22}><CalendarIcon /></Tool>
    <Spacer />
    <Tool $w={18}><DotsIcon /></Tool>
    <Tool $w={25}><ProfileIcon /></Tool>
    <Tool $w={25}><HLineIcon /></Tool>
    <Tool $w={25}><TrendIcon /></Tool>
    <Tool $w={25}><RectIcon /></Tool>
    <Tool $w={25}><ForecastIcon /></Tool>
    <Tool $w={25}><RangeIcon /></Tool>
    <Tool $w={28} $color="#c89238"><CrossIcon /></Tool>
    <Tool $w={4}>'</Tool>
    <Tool $w={25}>ETH</Tool>
    <Sep />
    <Tool $w={14}>%</Tool>
    <Tool $w={24}>log</Tool>
    <Tool $w={24}>auto</Tool>
    <Tool $w={26}><CornersIcon /></Tool>
  </Toolbar>
)

const ChartPanel = () => (
  <Panel $grow>
    <PanelTabs $glow>
      <PanelTab>Chart <small>X</small></PanelTab>
      <TabTools><AddBox><Plus size={8} strokeWidth={4} /></AddBox><EmptyBox /></TabTools>
    </PanelTabs>
    <ChartToolbar />
    <ChartBody>
      <DrawingBar />
      <ChartMain>
        <Panes>
          <EsPane />
          <NqPane />
        </Panes>
        <RangeBar />
      </ChartMain>
    </ChartBody>
  </Panel>
)

const OrderPanel = () => (
  <Panel>
    <PanelTabs>
      <PanelTab $pad={2}><Globe /><LetterBox>H</LetterBox>Order <small>X</small></PanelTab>
      <TabTools><AddBox><Plus size={8} strokeWidth={4} /></AddBox><EmptyBox /></TabTools>
    </PanelTabs>
    <Ticket onSubmit={e => e.preventDefault()}>
      <FieldRow $pr={6}>
        <Field>
          <legend><label htmlFor="contract">Contract</label></legend>
          <div><Dot /><select id="contract"><option>NQM26</option></select><Caret /></div>
        </Field>
        <MdSettings size={12} />
      </FieldRow>
      <Field>
        <legend><label htmlFor="type">Order Type</label></legend>
        <div><select id="type"><option>Market</option></select><Caret /></div>
      </Field>
      <Field>
        <legend><label htmlFor="size"># of Contracts</label></legend>
        <div><input id="size" defaultValue="1" /></div>
      </Field>
      <Quotes>
        <div>Bid:<br />26,770.75</div>
        <div><strong>26,771.25<br />1.00</strong></div>
        <div>Ask:<br />26,771.75</div>
      </Quotes>
      <AccountSelect id="order-account" value="50KT..." width="auto" />
      <Position>No Active Position</Position>
      <SizeRow>
        <RoundButton>-</RoundButton>
        <SizeGrid>
          {[1, 3, 5, 10, 15].map(n => <RoundButton key={n} $on={n === 1}>{n}</RoundButton>)}
        </SizeGrid>
        <RoundButton>+</RoundButton>
      </SizeRow>
      <FieldRow $mt={6} $pr={2}>
        <Field $dim $h={29}>
          <legend><label htmlFor="bracket">Position Bracket</label></legend>
          <div><select id="bracket"><option>Enabled</option></select><Caret $color="#bbb" /></div>
        </Field>
        <MdSettings size={12} />
      </FieldRow>
      <Actions>
        <ActionButton $bg="#4aa850">BUY +1 @ MARKET</ActionButton>
        <ActionButton $bg="#b52b3a">SELL -1 @ MARKET</ActionButton>
        <ActionRow><ActionButton $half>JOIN BID</ActionButton><ActionButton $half>JOIN ASK</ActionButton></ActionRow>
        <ActionRow><ActionButton disabled>CLOSE POSITION</ActionButton><ActionButton disabled>REVERSE POSITION</ActionButton></ActionRow>
        <ActionRow><ActionButton disabled>CANCEL ORDERS</ActionButton></ActionRow>
        <ActionRow><ActionButton $half>FLATTEN ALL</ActionButton><ActionButton $half>CANCEL ALL</ActionButton></ActionRow>
      </Actions>
    </Ticket>
  </Panel>
)

const WindowsTaskbar = () => (
  <Taskbar>
    <Weather>
      <svg width="18" height="20" viewBox="0 0 18 20">
        <path d="M1 14c4 2 9 0 10-5l4 2c2 5-3 9-7 9-3 0-6-2-7-6z" fill="#f0a030" />
        <circle cx="13" cy="6" r="5.500" fill="#c1272d" />
        <text x="11" y="9" fill="#fff" fontSize="8">1</text>
      </svg>
      <div>49°F<br /><span>Clear</span></div>
    </Weather>
    <Apps>
      <AppButton aria-label="Start">
        <svg width="16" height="16" viewBox="0 0 16 16">
          <defs><linearGradient id="win" x1="0" y1="0" x2="1" y2="1"><stop stopColor="#35c1f1" /><stop offset="1" stopColor="#0a74cf" /></linearGradient></defs>
          <path d="M0 0h7.700v7.700H0zM8.300 0H16v7.700H8.300zM0 8.300h7.700V16H0zM8.300 8.300H16V16H8.300z" fill="url(#win)" />
        </svg>
      </AppButton>
      <SearchPill>
        <Search size={11} strokeWidth={2.500} />
        <input aria-label="Search" placeholder="Search" />
        <svg width="33" height="16" viewBox="0 0 33 16">
          <defs><linearGradient id="dusk" x1="0" y1="0" x2="0" y2="1"><stop stopColor="#8fa6d0" /><stop offset=".4" stopColor="#e0a9bd" /><stop offset=".6" stopColor="#4a4668" /><stop offset="1" stopColor="#8d8bb0" /></linearGradient></defs>
          <rect width="33" height="16" rx="8" fill="url(#dusk)" />
          <path d="M1 10c4-3 6-1 9-3s5-1 7 0 8 0 14 3l-3 2H4z" fill="#2c2946" />
        </svg>
      </SearchPill>
      <AppButton aria-label="Copilot">
        <svg width="17" height="16" viewBox="0 0 17 16">
          <path d="M5 1h6l-3 10H2C0 11 1 7 2 4.500S4 1 5 1z" fill="#2a9be8" />
          <path d="M2 7l3-1 3 5-1 3H5c-2 0-3-3-3-7z" fill="#7ec24a" />
          <path d="M10 5h5c2 0 1.500 3 .5 6s-2.500 4-4 4H6z" fill="#e8618c" />
          <path d="M8 1h3c2 0 2 1.500 2.500 4H10z" fill="#6a4be0" /><path d="M7 11l-2 4h5l2-5z" fill="#f29a3f" />
          <path d="M9.500 5h1.500L8 11H6.500z" fill="#e4edf3" />
        </svg>
      </AppButton>
      <AppButton aria-label="Files">
        <svg width="17" height="15" viewBox="0 0 17 15"><path d="M0 1h6l2 2h8v11H0z" fill="#e8a927" /><path d="M0 5h17v9H0z" fill="#fbd25b" /><rect x="4" y="10" width="10" height="4" fill="#1a83cf" /></svg>
      </AppButton>
      <AppButton aria-label="Edge">
        <svg width="17" height="17" viewBox="0 0 17 17">
          <defs><linearGradient id="edge" x1="0" y1="1" x2="1" y2="0"><stop stopColor="#0c59a4" /><stop offset=".5" stopColor="#1f9fd8" /><stop offset="1" stopColor="#5fd66a" /></linearGradient></defs>
          <circle cx="8.500" cy="8.500" r="8" fill="url(#edge)" /><path d="M7 8c1-2 5-1 4.500 1.500-.5 1 1.500 1.500 5 .5-1 2-3 3-5 3-3 0-5.500-2-4.500-5z" fill="#d6e4ee" />
        </svg>
      </AppButton>
      <AppButton aria-label="Store">
        <svg width="16" height="16" viewBox="0 0 16 16"><path d="M5 4V1h6v3" fill="none" stroke="#1b7fcc" strokeWidth="1.500" /><rect y="4" width="16" height="12" rx="2" fill="#17568a" /><path d="M4.500 6.500h3v3h-3z" fill="#f25022" /><path d="M8.500 6.500h3v3h-3z" fill="#7fba00" /><path d="M4.500 10.500h3v3h-3z" fill="#00a4ef" /><path d="M8.500 10.500h3v3h-3z" fill="#ffb900" /></svg>
      </AppButton>
      <AppButton aria-label="Outlook">
        <svg width="17" height="16" viewBox="0 0 17 16"><path d="M3 6l9-5 4 5v9H3z" fill="#2a8be0" /><path d="M3 6l13 9H3z" fill="#1469c0" /><path d="M16 6l-9 6 9 3z" fill="#6fc2f5" /><rect y="7" width="8" height="8" rx="1" fill="#0b5cad" /><circle cx="4" cy="11" r="2" fill="none" stroke="#fff" /></svg>
      </AppButton>
      <AppButton $active aria-label="Chrome">
        <svg width="16" height="16" viewBox="0 0 16 16"><circle cx="8" cy="8" r="8" fill="#e33b2e" /><path d="M8 8 1.100 4A8 8 0 0 0 8 16z" fill="#2da94f" /><path d="M8 8v8a8 8 0 0 0 6.900-12H8z" fill="#fdbd00" /><circle cx="8" cy="8" r="4" fill="#fff" /><circle cx="8" cy="8" r="3" fill="#4285f4" /></svg>
      </AppButton>
      <AppButton $running aria-label="OBS Studio">
        <svg width="18" height="18" viewBox="0 0 18 18"><circle cx="8" cy="10" r="7" fill="#26262a" /><path d="M8 10c0-3-3-3-3-5M8 10c3-1 4 1 5 3M8 10c-1 3-4 2-5 1" fill="none" stroke="#cfcfd2" strokeWidth="1.200" /><circle cx="14" cy="4" r="4" fill="#e8131b" /></svg>
      </AppButton>
    </Apps>
    <Tray>
      <ChevronUp size={11} />
      <IconButton $w={17}><svg width="13" height="13" viewBox="0 0 13 13"><RefreshCw size={11} /><circle cx="9.500" cy="9.500" r="3" fill="#f09a1a" /></svg></IconButton>
      <IconButton $w={14}><svg width="13" height="12" viewBox="0 0 13 12"><Cloud size={11} /><circle cx="9" cy="8.500" r="3.200" fill="#1482d4" /></svg></IconButton>
      <IconButton $w={17} $color="#40669c"><Mic size={11} /></IconButton>
      <Wifi size={10} />
      <Volume2 size={10} />
      <Clock>6:21 AM<br />4/20/2026</Clock>
    </Tray>
  </Taskbar>
)

const App = () => (
  <Page>
    <GlobalStyle />
    <Browser />
    <Shell>
      <Nav />
      <Workspace>
        <Header />
        <Panels>
          <ChartPanel />
          <OrderPanel />
        </Panels>
        <Footer>
          <span>Version: 1.24.3-dev.1</span>
          <span>Licensed to Topstep &amp; powered by TopstepX. Copyright 2024-2026</span>
        </Footer>
      </Workspace>
    </Shell>
    <WindowsTaskbar />
  </Page>
)

export default App
